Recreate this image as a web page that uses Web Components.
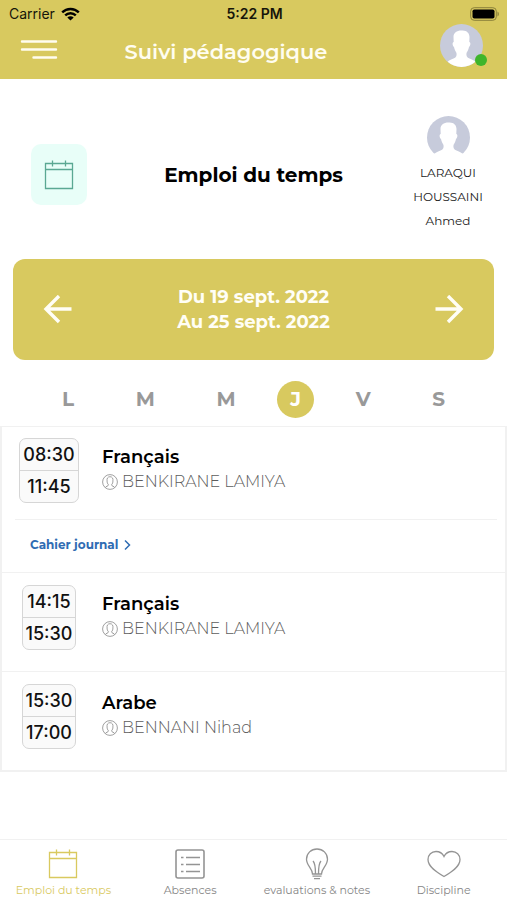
<!DOCTYPE html>
<html lang="fr">
<head>
<meta charset="utf-8">
<meta name="viewport" content="width=device-width, initial-scale=1">
<title>Suivi pédagogique</title>
<style>
  :root { --gold: #d8c95f; --grey: #999999; --line: #f1f1f1; }
  body { margin: 0; background: #ffffff; color: #000000; font-family: Montserrat, Inter, "Liberation Sans", sans-serif; }
</style>
</head>
<body>
<school-app></school-app>

<script>
const define = (name, html, setup) => {
  const template = document.createElement('template');
  template.innerHTML = html;
  customElements.define(name, class extends HTMLElement {
    connectedCallback() {
      if (this.shadowRoot) return;
      this.attachShadow({ mode: 'open' }).append(template.content.cloneNode(true));
      if (setup) setup(this, this.shadowRoot);
    }
  });
};

define('user-avatar', `
<style>
  :host { display: block; width: 43px; height: 43px; position: relative; }
  svg { display: block; width: 100%; height: 100%; }
  .bust { fill: #ffffff; }
  .dot { display: none; position: absolute; right: -4px; bottom: 1px; width: 12px; height: 12px; border-radius: 50%; background: #3fb52b; }
  :host([online]) .dot { display: block; }
  :host([cut]) .disc { clip-path: polygon(0 0, 100% 0, 100% 87%, 0 87%); }
</style>
<svg viewBox="0 0 43 43" aria-hidden="true">
  <circle class="disc" cx="21.5" cy="21.5" r="21.5" fill="#c7cbdb"/>
  <path class="bust" d="M21.500 6.500C26.500 6 29.500 9 29.500 13L29.300 18C31 18 30.500 22 29 23C28.500 26 27 28 26.500 29C26 32 27 33.500 29.500 34.500C32 35.500 34 36.200 35.300 37.800C31.500 41 27 43 21.500 43S11.500 41 7.700 37.800C9 36.200 11 35.500 13.500 34.500C16 33.500 17 32 16.500 29C16 28 14.500 26 14 23C12.500 22 12 18 13.700 18L13.500 13C13.500 9 16.500 6.500 21.500 6.500Z"/>
</svg>
<span class="dot"></span>`);

define('calendar-icon', `
<style>:host { display: block; width: 30px; height: 30px; } svg { display: block; }</style>
<svg width="30" height="30" viewBox="0 0 30 30" fill="none" stroke="currentColor" stroke-width="1.300" aria-hidden="true">
  <path d="M1.500 3.500H28.500V28.500H1.500ZM1.500 9.500H28.500M8.500 0.500V6.500M21.500 0.500V6.500"/>
</svg>`);

define('status-bar', `
<style>
  :host { display: grid; grid-template-columns: 1fr auto 1fr; align-items: center; height: 24px; padding: 4px 7px 0 9px; box-sizing: border-box; font: 500 14px/20px Inter, sans-serif; color: #16150a; }
  .left { display: flex; align-items: center; gap: 6px; font-weight: 400; }
  .time { font-weight: 600; }
  .battery { justify-self: end; }
  svg { display: block; }
</style>
<span class="left">Carrier
  <svg width="19" height="14" viewBox="0 0 19 14" aria-hidden="true"><g fill="none" stroke="#000" stroke-width="2.400"><path d="M1.200 5.400C5.800 .8 13.200 .8 17.800 5.400"/><path d="M4.200 8.400C7.100 5.500 11.900 5.500 14.800 8.400"/></g><path d="M6.300 10.400C8.100 8.700 10.900 8.700 12.700 10.400L9.500 13.600Z"/></svg>
</span>
<span class="time">5:22 PM</span>
<svg class="battery" width="30" height="14" viewBox="0 0 30 14" aria-hidden="true"><rect x=".7" y=".7" width="25.600" height="12.600" rx="3.500" fill="none" stroke="#8a803a"/><rect x="2.500" y="2.500" width="22" height="9" rx="1.800"/><path d="M27.500 4.500C29.300 5.200 29.300 8.800 27.500 9.500Z" fill="#8a803a"/></svg>`);

define('app-header', `
<style>
  :host { display: block; background: var(--gold); color: #fffdf0; }
  nav { display: grid; grid-template-columns: 38px 1fr 89px; height: 55px; padding: 0 24px 0 20px; }
  button { all: unset; justify-self: start; align-self: center; cursor: pointer; padding-bottom: 3px; }
  svg { display: block; }
  h1 { margin: 0; align-self: center; text-align: center; font-size: 21px; line-height: 28px; font-weight: 600; white-space: nowrap; }
  user-avatar { justify-self: end; }
</style>
<status-bar></status-bar>
<nav>
  <button type="button" aria-label="Menu"><svg width="38" height="20" viewBox="0 0 38 20" stroke="#fffdf0" stroke-width="2.400" stroke-linecap="round"><path d="M2 1.500H36M2 9.500H36M13.500 17.500H36"/></svg></button>
  <h1>Suivi pédagogique</h1>
  <user-avatar online></user-avatar>
</nav>`);

define('page-intro', `
<style>
  :host { display: grid; grid-template-columns: 100px 1fr 100px; align-items: center; padding: 37px 9px 26px; }
  .tile { justify-self: center; display: grid; place-items: center; width: 56px; height: 61px; border-radius: 10px; background: #e8fef8; color: #5aa893; }
  h2 { margin: 0; text-align: center; font-size: 20px; line-height: 28px; font-weight: 700; }
  .pupil { display: grid; justify-items: center; text-align: center; font-size: 12px; line-height: 24px; color: #222222; }
  p { margin: 2px 0 0; }
</style>
<div class="tile"><calendar-icon></calendar-icon></div>
<h2>Emploi du temps</h2>
<div class="pupil"><user-avatar cut></user-avatar><p>LARAQUI<br>HOUSSAINI<br>Ahmed</p></div>`);

define('week-picker', `
<style>
  :host { display: flex; align-items: center; justify-content: space-between; margin: 0 13px; padding: 26px 30px 25px; border-radius: 12px; background: var(--gold); color: #fffef6; }
  button { all: unset; cursor: pointer; }
  svg { display: block; }
  p { margin: 0; text-align: center; font-size: 18px; line-height: 25px; font-weight: 700; }
</style>
<button type="button" aria-label="Semaine précédente"><svg width="30" height="30" viewBox="0 0 30 30" fill="none" stroke="currentColor" stroke-width="3.400"><path d="M28.500 14H3.500M16 1L3 14L16 27"/></svg></button>
<p>Du 19 sept. 2022<br>Au 25 sept. 2022</p>
<button type="button" aria-label="Semaine suivante"><svg width="30" height="30" viewBox="0 0 30 30" fill="none" stroke="currentColor" stroke-width="3.400"><path d="M1.500 14H26.500M14 1L27 14L14 27"/></svg></button>`);

define('day-picker', `
<style>
  :host { display: flex; justify-content: space-between; align-items: center; padding: 21px 42px 8px; }
  button { all: unset; box-sizing: border-box; height: 37px; padding: 0 20px; font-size: 20px; line-height: 37px; font-weight: 700; color: var(--grey); cursor: pointer; }
  button[aria-pressed] { width: 37px; padding: 0; border-radius: 50%; text-align: center; background: var(--gold); color: #ffffff; }
</style>
<button type="button">L</button><button type="button">M</button><button type="button">M</button><button type="button" aria-pressed="true">J</button><button type="button">V</button><button type="button">S</button>`);

define('lesson-row', `
<style>
  :host { display: block; border-bottom: 1px solid var(--line); }
  .main { display: grid; grid-template-columns: 90px 1fr; align-items: start; padding: 12px 0 21px 2px; }
  :host([journal]) .main { padding-top: 11px; padding-bottom: 16px; }
  .times { justify-self: center; border: 1px solid #d6d6d6; border-radius: 7px; background: #fafafa; font: 500 18px/31px Inter, sans-serif; text-align: center; color: #111111; }
  time { display: block; padding: 0 3px; }
  time + time { border-top: 1px solid #d6d6d6; }
  .text { padding: 6px 0 0 8px; }
  h3 { margin: 0; font-size: 18px; line-height: 26px; font-weight: 600; }
  p { margin: 0; display: flex; align-items: center; gap: 4px; font-size: 16px; line-height: 24px; font-weight: 300; color: #5c5c5c; }
  svg { display: block; flex: none; }
  .more { display: none; margin: 0 8px 0 13px; padding: 13px 0 15px 15px; border-top: 1px solid var(--line); font-size: 12px; line-height: 24px; }
  :host([journal]) .more { display: block; }
  a { display: flex; width: max-content; align-items: center; gap: 6px; color: #2f6cb3; font-weight: 700; text-decoration: none; }
</style>
<div class="main">
  <div class="times"><time class="from"></time><time class="to"></time></div>
  <div class="text">
    <h3><slot></slot></h3>
    <p><svg width="16" height="16" viewBox="0 0 16 16" fill="none" stroke="#888" stroke-width=".8" aria-hidden="true"><circle cx="8" cy="8" r="7.400"/><path d="M3.200 13.500C3.600 12.300 6.500 12.300 6.500 10.800C5.500 9.800 5 8.400 5.100 7C4.700 4.500 5.700 2.700 8 2.700S11.300 4.500 10.900 7C11 8.400 10.500 9.800 9.500 10.800C9.500 12.300 12.400 12.300 12.800 13.500"/></svg><slot name="teacher"></slot></p>
  </div>
</div>
<div class="more"><a href="#journal">Cahier journal <svg width="7" height="12" viewBox="0 0 7 12" fill="none" stroke="currentColor" stroke-width="1.500" aria-hidden="true"><path d="M1 1.500L5.500 6L1 10.500"/></svg></a></div>`,
(host, root) => {
  root.querySelector('.from').textContent = host.getAttribute('from');
  root.querySelector('.to').textContent = host.getAttribute('to');
});

define('lesson-list', `
<style>:host { display: block; border: 2px solid var(--line); border-width: 1px 2px; }</style>
<slot></slot>`);

define('tab-item', `
<style>
  :host { display: block; }
  a { display: grid; justify-items: center; align-content: start; gap: 2px; padding-top: 8px; font-size: 11px; line-height: 16px; color: #858585; text-decoration: none; white-space: nowrap; }
  .icon { display: grid; place-items: center; height: 32px; }
  :host([active]) a { color: #d9c95f; }
</style>
<a href="#"><span class="icon"><slot name="icon"></slot></span><slot></slot></a>`);

define('tab-bar', `
<style>
  :host { display: grid; grid-template-columns: repeat(4, minmax(0, 1fr)); height: 61px; box-sizing: border-box; border-top: 1px solid var(--line); }
  svg { display: block; fill: none; stroke: #949494; stroke-width: 1.300; }
</style>
<tab-item active><calendar-icon slot="icon"></calendar-icon>Emploi du temps</tab-item>
<tab-item><svg slot="icon" width="30" height="30" viewBox="0 0 30 30" aria-hidden="true"><rect x="1" y="1" width="28" height="28" rx="2" stroke-width="1.600"/><path d="M11 8.500H25M11 15.500H25M11 22.500H25M6 8.500H8.500M6 15.500H8.500M6 22.500H8.500" stroke-width="1.500"/></svg>Absences</tab-item>
<tab-item><svg slot="icon" width="24" height="32" viewBox="0 0 24 32" aria-hidden="true"><path d="M7.500 26C7.500 20.500 1.500 17.500 1.500 11.200C1.500 5.300 6.200 1 12 1S22.500 5.300 22.500 11.200C22.500 17.500 16.500 20.500 16.500 26ZM7.500 28.200H16.500M9 30.700H15M8 13C9.500 14.500 10.500 18 10.500 26M16 13C14.500 14.500 13.500 18 13.500 26"/></svg>evaluations &amp; notes</tab-item>
<tab-item><svg slot="icon" width="34" height="28" viewBox="0 0 34 28" aria-hidden="true"><path d="M17 26.500C10 22.500 1 17 1 9.500C1 5 4.500 1.500 9 1.500C12.500 1.500 15.500 3.500 17 6.500C18.500 3.500 21.500 1.500 25 1.500C29.500 1.500 33 5 33 9.500C33 17 24 22.500 17 26.500Z"/></svg>Discipline</tab-item>`);

define('school-app', `
<style>
  :host { display: flex; flex-direction: column; min-height: 100vh; }
  main { flex: 1; }
</style>
<app-header></app-header>
<main>
  <page-intro></page-intro>
  <week-picker></week-picker>
  <day-picker></day-picker>
  <lesson-list>
    <lesson-row from="08:30" to="11:45" journal>Français<span slot="teacher">BENKIRANE LAMIYA</span></lesson-row>
    <lesson-row from="14:15" to="15:30">Français<span slot="teacher">BENKIRANE LAMIYA</span></lesson-row>
    <lesson-row from="15:30" to="17:00">Arabe<span slot="teacher">BENNANI Nihad</span></lesson-row>
  </lesson-list>
</main>
<tab-bar></tab-bar>`);
</script>
</body>
</html>
